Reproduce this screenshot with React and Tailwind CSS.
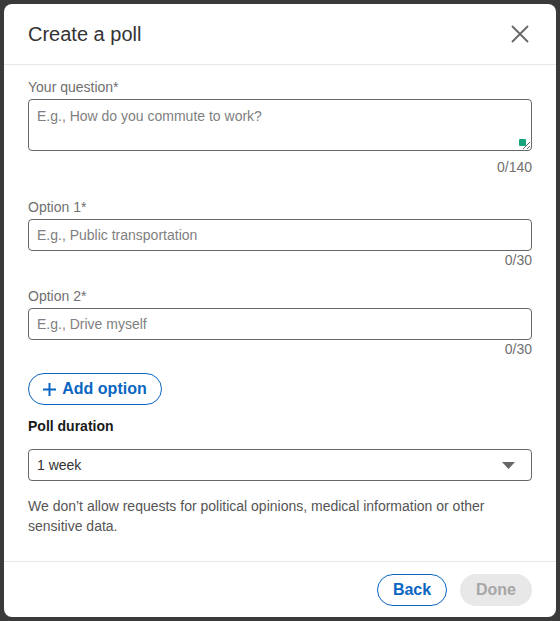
import React from 'react';

const Field = ({ label, placeholder, max }) => (
  <div>
    <label className="block text-sm leading-5 text-[#707070]">{label}</label>
    <input
      className="mt-[2px] block h-8 w-full rounded border border-[#666] px-2 text-sm text-[#333] placeholder:text-[#808080] outline-none"
      placeholder={placeholder}
    />
    <div className="mt-[1px] text-right text-sm leading-4 text-[#707070]">0/{max}</div>
  </div>
);

const App = () => {
  return (
    <div className="h-[621px] bg-[#3a3a3a] p-1 font-['Liberation_Sans',Arial,sans-serif]">
      <div className="flex h-[613px] flex-col overflow-hidden rounded-lg bg-white">
        <header className="flex h-[61px] shrink-0 items-center justify-between border-b border-[#e8e8e8] pl-6 pr-6">
          <h2 className="text-xl text-[#333]">Create a poll</h2>
          <button className="flex h-6 w-6 items-center justify-center text-[#666]">
            <svg width="18" height="18" viewBox="0 0 18 18" fill="none" stroke="currentColor" strokeWidth="1.8">
              <path d="M1 1l16 16M17 1L1 17" />
            </svg>
          </button>
        </header>

        <div className="flex-1 px-6 pt-3">
          <label className="block text-sm leading-5 text-[#707070]">Your question*</label>
          <div className="relative mt-[2px]">
            <textarea
              className="block h-[52px] w-full resize-y rounded border border-[#666] px-2 py-[6px] text-sm text-[#333] placeholder:text-[#808080] outline-none"
              placeholder="E.g., How do you commute to work?"
            />
            <span className="absolute bottom-[5px] right-[6px] h-[7px] w-[7px] rounded-[1px] bg-[#16a37e]" />
          </div>
          <div className="mt-[6px] text-right text-sm leading-5 text-[#707070]">0/140</div>

          <div className="mt-5">
            <Field label="Option 1*" placeholder="E.g., Public transportation" max={30} />
          </div>
          <div className="mt-[18px]">
            <Field label="Option 2*" placeholder="E.g., Drive myself" max={30} />
          </div>

          <button className="mt-4 flex h-8 w-[134px] items-center justify-center gap-[6px] rounded-full border border-[#0a66c2] text-base font-bold text-[#0a66c2]">
            <svg width="13" height="13" viewBox="0 0 13 13" fill="none" stroke="currentColor" strokeWidth="2">
              <path d="M6.5 0v13M0 6.5h13" />
            </svg>
            Add option
          </button>

          <div className="mt-[11px] text-sm font-bold leading-5 text-[#1a1a1a]">Poll duration</div>
          <div className="relative mt-[13px] flex h-8 items-center rounded border border-[#666] px-2 text-sm text-[#333]">
            1 week
            <svg className="absolute right-4 top-[12px]" width="13" height="7" viewBox="0 0 13 7" fill="#666">
              <path d="M0 0h13L6.5 7z" />
            </svg>
          </div>

          <p className="mt-[15px] text-sm leading-5 text-[#555]">
            We don’t allow requests for political opinions, medical information or other sensitive data.
          </p>
        </div>

        <footer className="flex h-[56px] shrink-0 items-center justify-end gap-[13px] border-t border-[#e8e8e8] px-6">
          <button className="h-8 w-[70px] rounded-full border border-[#0a66c2] text-base font-bold text-[#0a66c2]">
            Back
          </button>
          <button className="h-8 w-[72px] rounded-full bg-[#e8e8e8] text-base font-bold text-[#a6a6a6]">
            Done
          </button>
        </footer>
      </div>
    </div>
  );
};

export default App;
